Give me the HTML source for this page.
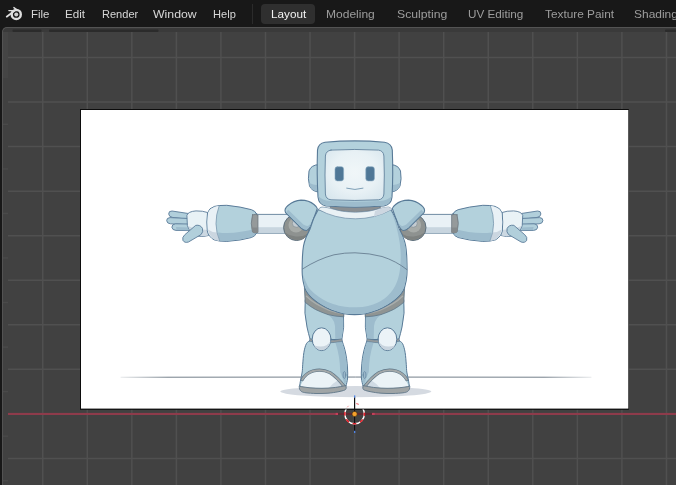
<!DOCTYPE html>
<html><head><meta charset="utf-8">
<style>
html,body{margin:0;padding:0;background:#181818;}
body{width:676px;height:485px;overflow:hidden;position:relative;font-family:"Liberation Sans",sans-serif;}
.m,.t{position:absolute;top:7px;font-size:11.5px;line-height:14px;white-space:nowrap;display:inline-block;transform-origin:0 0;}
.m{color:#d6d6d6;}
.t{color:#9c9c9c;}
#lay{position:absolute;left:261px;top:4px;width:54px;height:20px;background:#2f2f2f;border-radius:4px;}
#sep{position:absolute;left:252px;top:4px;width:1px;height:20px;background:#2b2b2b;}
svg{position:absolute;left:0;top:0;}
#txt{position:absolute;left:0;top:0;width:676px;height:27px;overflow:hidden;filter:grayscale(1);}
</style></head><body>
<svg width="676" height="485" viewBox="0 0 676 485">
<path d="M2 485V32a5 5 0 0 1 5-5H676V485Z" fill="#414141"/>
<rect x="3" y="28" width="673" height="4" fill="#3a3a3a"/>
<rect x="3" y="32" width="5" height="46" fill="#454545"/>
<path d="M2.5 485V32a4.500 4.500 0 0 1 4.500-4.500H676" fill="none" stroke="#535353" stroke-width="1"/>
<rect x="12.500" y="29.500" width="29" height="2.500" rx="1" fill="#2b2b2b"/>
<rect x="49" y="29.500" width="109.500" height="2.500" rx="1" fill="#2b2b2b"/>
<rect x="665" y="29.500" width="14" height="2.500" rx="1" fill="#2b2b2b"/>
<g stroke="#505050" stroke-width="1.500">
<line x1="42.75" y1="32" x2="42.75" y2="485"/>
<line x1="87.30" y1="32" x2="87.30" y2="485"/>
<line x1="131.85" y1="32" x2="131.85" y2="485"/>
<line x1="176.40" y1="32" x2="176.40" y2="485"/>
<line x1="220.95" y1="32" x2="220.95" y2="485"/>
<line x1="265.50" y1="32" x2="265.50" y2="485"/>
<line x1="310.05" y1="32" x2="310.05" y2="485"/>
<line x1="354.60" y1="32" x2="354.60" y2="485"/>
<line x1="399.15" y1="32" x2="399.15" y2="485"/>
<line x1="443.70" y1="32" x2="443.70" y2="485"/>
<line x1="488.25" y1="32" x2="488.25" y2="485"/>
<line x1="532.80" y1="32" x2="532.80" y2="485"/>
<line x1="577.35" y1="32" x2="577.35" y2="485"/>
<line x1="621.90" y1="32" x2="621.90" y2="485"/>
<line x1="666.45" y1="32" x2="666.45" y2="485"/>
<line x1="8" y1="57.50" x2="676" y2="57.50"/>
<line x1="8" y1="102.05" x2="676" y2="102.05"/>
<line x1="8" y1="146.60" x2="676" y2="146.60"/>
<line x1="8" y1="191.15" x2="676" y2="191.15"/>
<line x1="8" y1="235.70" x2="676" y2="235.70"/>
<line x1="8" y1="280.25" x2="676" y2="280.25"/>
<line x1="8" y1="324.80" x2="676" y2="324.80"/>
<line x1="8" y1="369.35" x2="676" y2="369.35"/>
<line x1="8" y1="458.45" x2="676" y2="458.45"/>
</g>
<rect x="3" y="123.62" width="5" height="1.4" fill="#4a4a4a"/>
<rect x="3" y="168.18" width="5" height="1.4" fill="#4a4a4a"/>
<rect x="3" y="212.72" width="5" height="1.4" fill="#4a4a4a"/>
<rect x="3" y="257.28" width="5" height="1.4" fill="#4a4a4a"/>
<rect x="3" y="301.82" width="5" height="1.4" fill="#4a4a4a"/>
<rect x="3" y="346.38" width="5" height="1.4" fill="#4a4a4a"/>
<rect x="3" y="390.93" width="5" height="1.4" fill="#4a4a4a"/>
<rect x="3" y="435.47" width="5" height="1.4" fill="#4a4a4a"/>
<rect x="3" y="480.02" width="5" height="1.4" fill="#4a4a4a"/>
<!-- x axis -->
<rect x="8" y="412.900" width="668" height="2.100" fill="#8e3b4b"/>
<!-- image -->
<rect x="80" y="109" width="548.800" height="300.800" fill="#0c0c0c"/>
<rect x="81" y="110" width="547.300" height="298.600" fill="#ffffff"/>
<g id="robot" stroke-linejoin="round" stroke-linecap="round">
<defs>
<linearGradient id="gl" gradientUnits="userSpaceOnUse" x1="121" y1="0" x2="591" y2="0"><stop offset="0" stop-color="#5a6875" stop-opacity="0.150"/><stop offset="0.100" stop-color="#5a6875" stop-opacity="0.850"/><stop offset="0.900" stop-color="#5a6875" stop-opacity="0.850"/><stop offset="1" stop-color="#5a6875" stop-opacity="0.150"/></linearGradient>
<radialGradient id="fg" cx="0.5" cy="0.45" r="0.65"><stop offset="0" stop-color="#f0f6f8"/><stop offset="0.6" stop-color="#e8f1f5"/><stop offset="1" stop-color="#d9e7ee"/></radialGradient>
<g id="arm">
  <!-- fingers -->
  <g fill="#b1cfdb" stroke="#5b7c9a" stroke-width="0.900">
    <path d="M189 213.600 L172 211 Q168.600 210.800 168.700 214 Q169 217 172.500 217.400 L189 219.500Z"/>
    <path d="M189 218.500 L170 217.600 Q166.500 217.800 166.700 220.700 Q167 223.600 170.500 223.800 L189 224.800Z"/>
    <path d="M189 224 L175.500 223.800 Q171.800 224.200 171.900 227.200 Q172.200 230.200 176 230.400 L189 230.600Z"/>
  </g>
  <path d="M176 227 L188 227.500 L188 230.300 L176.500 230Z" fill="#9dbccd"/>
  <!-- palm -->
  <path d="M187 215 Q188 211.500 196 210.900 Q203 210.800 207.500 212.500 L208.500 235.500 Q203 237.200 198 236.200 Q190 233.500 187.500 226Z" fill="#e9f2f6" stroke="#5b7c9a" stroke-width="0.900"/>
  <path d="M188 226 Q195 229 207.800 230 L208.200 235.200 Q203 236.800 198 235.800 Q191 233.300 188 226Z" fill="#ccd8e2"/>
  <!-- thumb -->
  <path d="M196.100 225.300 Q200.500 224.500 202.500 228.500 Q203.500 232 201 234.600 L188.500 242 Q184.500 243.300 182.900 240.300 Q181.900 237.300 184.500 235Z" fill="#b1cfdb" stroke="#5b7c9a" stroke-width="0.900"/>
  <!-- upper arm tube -->
  <rect x="255" y="214.400" width="36" height="18.800" fill="#e9f1f6" stroke="#5f7e98" stroke-width="0.900"/>
  <rect x="255.500" y="227.200" width="35" height="5.600" fill="#c8d5df"/>
  <!-- forearm -->
  <path d="M256.500 213.800 Q255.500 211 251.500 209.700 Q241 206.700 226.800 205.300 Q219 205.200 214.500 206.400 Q209 208 207.500 213 Q206.300 222 207.300 231 Q208.500 236.500 214 239.800 Q219 241.500 226.800 241.400 Q241 240.500 251.500 237.500 Q255.500 236 256.500 233 Q253 223.500 256.500 213.800Z" fill="#b3d1dc" stroke="#5b7c9a" stroke-width="1"/>
  <path d="M218 232.500 Q235 234.500 256.200 228.800 L256.200 232.800 Q255.300 235.600 251.400 237 Q241 240 226.800 240.900 Q221 240.900 219.500 240.500Z" fill="#9dbccd"/>
  <path d="M219.100 206 Q217 205.800 214.600 206.900 Q209.400 208.400 208 213.100 Q206.800 222 207.800 230.900 Q208.900 236.100 214.200 239.300 Q217 240.400 219.600 240.700 Q212.500 224 219.100 206Z" fill="#e9f1f6"/>
  <path d="M207.900 229.500 Q212 232.500 217 232.500 L219.300 240.600 Q216.500 240.400 214.200 239.300 Q209.500 236.500 207.900 229.500Z" fill="#cbd6e0"/>
  <path d="M219.100 206 Q212.500 224 219.600 240.800" fill="none" stroke="#6f8ea8" stroke-width="0.700"/>
  <!-- elbow ring -->
  <path d="M252.500 214.800 Q256 213.800 258 215 L258 232.400 Q255 233.800 252.500 232 Q250 223.500 252.500 214.800Z" fill="#959a9b" stroke="#65717a" stroke-width="0.700"/>
  <path d="M251.700 227.500 L258 227.500 L258 232.400 Q255 233.800 252.500 232Z" fill="#84898b"/>
  <!-- shoulder joint -->
  <circle cx="296.600" cy="227.500" r="13" fill="#8e9290" stroke="#5c6e7c" stroke-width="1"/>
  <path d="M284.500 232 Q289 240 298 240 Q305 239.500 308.500 233.500 Q301 238 293.500 236 Q288 235 284.500 232Z" fill="#7e8280"/>
  <circle cx="296" cy="225" r="7.500" fill="#a7aba8"/>
  <circle cx="296.300" cy="223.300" r="4" fill="#c4cbd0" stroke="#858f95" stroke-width="0.700"/>
  <!-- shoulder pad -->
  <path d="M285.500 212.500 Q283.800 209 288 205.500 Q294 200.300 301 200.100 Q309 200.200 314 204.500 Q317 207 317.300 208.500 Q314.500 217 311.400 224.200 Q309 229 306.800 230.400 Q304 230.500 301 228 Z" fill="#b3d1dc" stroke="#587a97" stroke-width="1.100"/>
  <path d="M286 212.300 L288.200 209.800 L303.300 224.500 Q306 226.300 308.300 225.800 Q310 225 311.800 222 Q310 227.500 306.700 229.800 Q304 229.900 301.300 227.600Z" fill="#9dbccd"/>
</g>
<g id="leg">
  <!-- thigh -->
  <path d="M305.200 300 Q303.800 313 307 327 Q308.500 334 310.200 339.500 L341.800 339.500 Q344.600 328 343.500 314 Z" fill="#b3d1dc" stroke="#587a97" stroke-width="1"/>
  <path d="M325 313 Q334 317 335 326 L335.300 339 L341.500 339 Q344.100 328 343 314.500Z" fill="#9dbccd"/>
  <!-- shin -->
  <path d="M310.20 340.50 C309.57 341.03 307.45 341.72 306.40 343.70 C305.35 345.68 304.52 348.90 303.90 352.40 C303.28 355.90 302.98 361.43 302.70 364.70 C302.42 367.97 302.55 369.45 302.20 372.00 C301.85 374.55 301.03 377.67 300.60 380.00 C300.17 382.33 299.77 385.00 299.60 386.00 L346 386 C346.27 384.67 347.35 381.00 347.60 378.00 C347.85 375.00 347.67 371.23 347.50 368.00 C347.33 364.77 347.05 361.68 346.60 358.60 C346.15 355.52 345.57 352.52 344.80 349.50 C344.03 346.48 342.47 342.00 342.00 340.50 Q327 343.500 310.200 340.500Z" fill="#b3d1dc" stroke="#587a97" stroke-width="1"/>
  <path d="M335.500 343 Q340 356 340.200 372 Q343 378 345 385.500 Q347.700 377 346.800 365 Q345.500 352 341.700 341.500Z" fill="#9dbccd"/>
  <path d="M310.200 338.800 Q327 342 342 338.800 L342.300 341.300 Q327 344.500 309.700 341.300Z" fill="#959a9c" stroke="#587a97" stroke-width="0.600"/>
  <ellipse cx="344.400" cy="375" rx="1.400" ry="3.400" fill="#9ab7c9" stroke="#587a97" stroke-width="0.600"/>
  <!-- knee -->
  <ellipse cx="321.600" cy="339.200" rx="9.400" ry="11.400" fill="#ebf3f7" stroke="#587a97" stroke-width="1"/>
  <path d="M313.800 345.500 Q317 350.600 323 350 Q329 348.500 330.700 341 Q326 349 313.800 345.500Z" fill="#c8d4de"/>
  <!-- foot -->
  <path d="M300.200 386.600 Q302.500 380 307 375.500 Q313 371.600 321 370.800 Q329 372 335 377.500 Q340 382.500 342.800 386.800 Q322 390 300.200 386.600Z" fill="#ebf3f7"/>
  <path d="M329 388 Q333 383 337.500 380.500 Q340.500 383.500 342.800 386.800 Q336 388 329 388Z" fill="#d0dbe4"/>
  <path d="M302.300 379.500 Q305.500 373.500 313 371 Q322 368.800 330 372.600 Q337 377 344.300 386.500" fill="none" stroke="#5d7587" stroke-width="3.200"/>
  <path d="M302.300 379.500 Q305.500 373.500 313 371 Q322 368.800 330 372.600 Q337 377 344.300 386.500" fill="none" stroke="#a3a8a9" stroke-width="1.900"/>
  <path d="M299.50 386.30 C301.25 386.55 306.25 387.47 310.00 387.80 C313.75 388.13 318.00 388.33 322.00 388.30 C326.00 388.27 330.00 388.05 334.00 387.60 C338.00 387.15 344.00 385.93 346.00 385.60 L346.2 388.2 C345.97 388.50 346.17 389.40 344.80 390.00 C343.43 390.60 340.80 391.27 338.00 391.80 C335.20 392.33 331.67 392.92 328.00 393.20 C324.33 393.48 319.67 393.57 316.00 393.50 C312.33 393.43 308.42 393.12 306.00 392.80 C303.58 392.48 302.53 392.15 301.50 391.60 C300.47 391.05 300.08 389.85 299.80 389.50Z" fill="#a0a5a6" stroke="#5d7587" stroke-width="0.900"/>
</g>
</defs>
<!-- shadow -->
<ellipse cx="355.800" cy="391.600" rx="75.500" ry="5.600" fill="#d5dae1"/>
<!-- ground line -->
<path d="M121 377.250 Q355 376.850 591 377.250" fill="none" stroke="url(#gl)" stroke-width="1"/>
<!-- legs -->
<use href="#leg"/>
<use href="#leg" transform="translate(709 0) scale(-1 1)"/>
<!-- waist band -->
<g><path d="M304.400 288 L305.200 302.300 Q310 306.500 315.500 309.500 Q322 312.600 328 314.600 Q336 316.600 343.800 316.800 L343.800 304 Z" fill="#8f9493" stroke="#5d7587" stroke-width="0.800"/><path d="M306.500 296.300 Q311 300.800 316.500 303.800 Q323 307.500 329 310 Q337 313 344 313.600" fill="none" stroke="#a9aead" stroke-width="1.500"/></g>
<g transform="translate(709 0) scale(-1 1)"><path d="M304.400 288 L305.200 302.300 Q310 306.500 315.500 309.500 Q322 312.600 328 314.600 Q336 316.600 343.800 316.800 L343.800 304 Z" fill="#8f9493" stroke="#5d7587" stroke-width="0.800"/><path d="M306.500 296.300 Q311 300.800 316.500 303.800 Q323 307.500 329 310 Q337 313 344 313.600" fill="none" stroke="#a9aead" stroke-width="1.500"/></g>
<!-- arms -->
<use href="#arm"/>
<use href="#arm" transform="translate(709.600 0) scale(-1 1)"/>
<!-- neck -->
<ellipse cx="355.300" cy="207" rx="25.300" ry="4.800" fill="#8a8f93" stroke="#6d7479" stroke-width="0.700"/>
<!-- body -->
<path id="bodyp" d="M318.30 209.50 C317.50 211.08 314.88 215.75 313.50 219.00 C312.12 222.25 311.25 225.92 310.00 229.00 C308.75 232.08 307.08 234.67 306.00 237.50 C304.92 240.33 304.10 242.58 303.50 246.00 C302.90 249.42 302.60 253.17 302.40 258.00 C302.20 262.83 301.95 270.15 302.30 275.00 C302.65 279.85 303.55 283.98 304.50 287.10 C305.45 290.22 306.45 291.63 308.00 293.70 C309.55 295.77 311.80 297.78 313.80 299.50 C315.80 301.22 317.63 302.52 320.00 304.00 C322.37 305.48 325.33 307.13 328.00 308.40 C330.67 309.67 333.35 310.72 336.00 311.60 C338.65 312.48 340.80 313.20 343.90 313.70 C347.00 314.20 351.03 314.60 354.60 314.60 C358.17 314.60 362.20 314.20 365.30 313.70 C368.40 313.20 370.55 312.48 373.20 311.60 C375.85 310.72 378.53 309.67 381.20 308.40 C383.87 307.13 386.83 305.48 389.20 304.00 C391.57 302.52 393.40 301.22 395.40 299.50 C397.40 297.78 399.65 295.77 401.20 293.70 C402.75 291.63 403.75 290.22 404.70 287.10 C405.65 283.98 406.55 279.85 406.90 275.00 C407.25 270.15 407.00 262.83 406.80 258.00 C406.60 253.17 406.30 249.42 405.70 246.00 C405.10 242.58 404.28 240.33 403.20 237.50 C402.12 234.67 400.45 232.08 399.20 229.00 C397.95 225.92 397.08 222.25 395.70 219.00 C394.32 215.75 391.70 211.08 390.90 209.50 Q354.6 224 318.3 209.5Z" fill="#b3d1dc" stroke="#587a97" stroke-width="1.100"/>
<!-- body shade -->
<path d="M390.30 209.20 C391.10 210.78 393.72 215.45 395.10 218.70 C396.48 221.95 397.35 225.62 398.60 228.70 C399.85 231.78 401.52 234.37 402.60 237.20 C403.68 240.03 404.50 242.28 405.10 245.70 C405.70 249.12 406.00 252.87 406.20 257.70 C406.40 262.53 406.65 269.85 406.30 274.70 C405.95 279.55 405.05 283.68 404.10 286.80 C403.15 289.92 402.15 291.33 400.60 293.40 C399.05 295.47 396.80 297.48 394.80 299.20 C392.80 300.92 390.97 302.22 388.60 303.70 C386.23 305.18 383.27 306.83 380.60 308.10 C377.93 309.37 375.25 310.42 372.60 311.30 C369.95 312.18 367.70 312.95 364.70 313.40 C361.70 313.85 357.97 314.00 354.60 314.00 C351.23 314.00 347.50 313.85 344.50 313.40 C341.50 312.95 339.25 312.18 336.60 311.30 C333.95 310.42 331.27 309.37 328.60 308.10 C325.93 306.83 322.97 305.18 320.60 303.70 C318.23 302.22 316.40 300.92 314.40 299.20 C312.40 297.48 310.15 295.47 308.60 293.40 C307.05 291.33 306.05 289.92 305.10 286.80 C304.15 283.68 303.27 276.72 302.90 274.70 L305.50 281.00 C306.08 282.17 307.42 285.83 309.00 288.00 C310.58 290.17 312.67 292.08 315.00 294.00 C317.33 295.92 320.00 297.83 323.00 299.50 C326.00 301.17 329.33 302.78 333.00 304.00 C336.67 305.22 341.00 306.25 345.00 306.80 C349.00 307.35 353.17 307.43 357.00 307.30 C360.83 307.17 364.50 306.80 368.00 306.00 C371.50 305.20 374.83 304.08 378.00 302.50 C381.17 300.92 384.33 298.92 387.00 296.50 C389.67 294.08 392.08 291.25 394.00 288.00 C395.92 284.75 397.42 281.00 398.50 277.00 C399.58 273.00 400.17 268.50 400.50 264.00 C400.83 259.50 400.83 254.67 400.50 250.00 C400.17 245.33 399.42 240.67 398.50 236.00 C397.58 231.33 396.25 226.25 395.00 222.00 C393.75 217.75 391.67 212.42 391.00 210.50Z" fill="#9dbccd"/>
<!-- belly line -->
<path d="M302.500 269 Q318 259 334 254.800 Q345 252.600 355 252.800 Q370 253.200 382 256.500 Q396 261 406.800 269.500" fill="none" stroke="#5e7488" stroke-width="0.800"/>
<!-- collar -->
<path d="M318.300 209.500 Q319.500 207.300 322 207 Q328 207.500 331 208.500 Q342 212.300 355.300 212.300 Q369 212.300 380 208.500 Q383 207.500 388.500 207 Q391 207.400 391.800 209.500 Q375 218.800 355.300 218.800 Q335 218.800 318.300 209.500Z" fill="#e9f1f5" stroke="#6f8da6" stroke-width="0.700"/>
<path d="M375 211 Q380 209 384 207.500 L388.500 207.200 Q390.800 207.600 391.400 209.500 Q383 214.200 374 216.500Z" fill="#cdd7e1"/>
<!-- ears -->
<path d="M318.500 164.600 Q311 165 309 171 Q307.600 179 309.500 186 Q312 191.500 318.500 192Z" fill="#b3d1dc" stroke="#5b7c9a" stroke-width="1"/>
<path d="M309.300 183 Q314 185.500 318.500 185 L318.500 191.500 Q312.500 191 309.800 186.500Z" fill="#9dbccd"/>
<path d="M391 164.600 Q398.500 165 400.500 171 Q401.900 179 400 186 Q397.500 191.500 391 192Z" fill="#b3d1dc" stroke="#5b7c9a" stroke-width="1"/>
<path d="M400.200 183 Q395.500 185.500 391 185 L391 191.500 Q397 191 399.700 186.500Z" fill="#9dbccd"/>
<!-- head -->
<path d="M325 142.200 Q355 139.600 384.500 142.200 Q391.500 143.300 392.300 150 Q393.300 175 392 197 Q391.300 204.600 384 206 Q355 208.300 326 206 Q318.700 204.600 318 197 Q316.700 175 317.500 150 Q318.200 143.300 325 142.200Z" fill="#b3d1dc" stroke="#587a97" stroke-width="1.100"/>
<path d="M318.500 196 Q322 200.300 330 201 Q355 202.300 380 201 Q388 200.300 391.500 196 Q391 204.200 384 205.500 Q355 207.800 326 205.500 Q319.200 204.200 318.500 196Z" fill="#9dbccd"/>
<!-- face -->
<path d="M331 150.100 Q355 148.800 378.500 150.100 Q383.500 150.800 383.900 156 Q384.700 175 383.900 194 Q383.400 199.200 378.500 199.800 Q355 201.100 331 199.800 Q325.800 199.200 325.400 194 Q324.600 175 325.400 156 Q325.800 150.800 331 150.100Z" fill="url(#fg)" stroke="#62829d" stroke-width="0.900"/>
<!-- eyes -->
<rect x="335" y="166.700" width="8.600" height="14.200" rx="2.300" fill="#4f7796" stroke="#86a8c0" stroke-width="0.600"/>
<rect x="365.800" y="166.700" width="8.600" height="14.200" rx="2.300" fill="#4f7796" stroke="#86a8c0" stroke-width="0.600"/>
<!-- smile -->
<path d="M346.700 188.200 Q355 190.800 363 188.200" fill="none" stroke="#6289a5" stroke-width="0.800"/>
</g>

<!-- cursor -->
<g id="cursor">
<rect x="337.500" y="412.900" width="35" height="2.100" fill="#5a2a33"/>
<rect x="335.600" y="412.900" width="2.400" height="2.100" fill="#c4405a"/>
<rect x="372" y="412.900" width="2.700" height="2.100" fill="#c4405a"/>
<line x1="354.600" y1="397.300" x2="354.600" y2="431" stroke="#111" stroke-width="1.200"/>
<rect x="354" y="395.400" width="1.300" height="2.200" fill="#4f86e8"/>
<rect x="354" y="430.800" width="1.300" height="2.200" fill="#4f86e8"/>
<clipPath id="cc"><rect x="340" y="409.600" width="30" height="20"/></clipPath>
<g clip-path="url(#cc)">
<circle cx="354.600" cy="414" r="9.800" fill="none" stroke="#ffffff" stroke-width="1.400"/>
<circle cx="354.600" cy="414" r="9.800" fill="none" stroke="#e0202a" stroke-width="1.500" stroke-dasharray="3.850 3.850" stroke-dashoffset="1.900"/>
</g>
<path d="M347.200 407.300 L348.600 405.800" stroke="#f0a0a4" stroke-width="1" fill="none"/>
<path d="M356.300 403.600 L358.800 404.300" stroke="#ee5a62" stroke-width="1" fill="none"/>
<circle cx="354.600" cy="414" r="2.600" fill="#f4a12b" stroke="#3a2a10" stroke-width="0.600"/>
</g>
</svg>
<!-- top bar -->
<svg width="30" height="27" viewBox="0 0 30 27">
<g fill="none" stroke="#dedede" stroke-linecap="round">
<circle cx="16.250" cy="14.400" r="4.550" stroke-width="2.400"/>
<path d="M6.700 16.700 L14.200 11" stroke-width="1.700"/>
<path d="M8.900 10.600H16.500" stroke-width="1.400"/>
<path d="M13.900 7.600L18.200 10.700" stroke-width="1.400"/>
</g>
<circle cx="16.250" cy="14.400" r="2" fill="#d0d0d0"/>
</svg>
<div id="sep"></div><div id="lay"></div>
<div id="txt">
<span class="m" style="left:31.4px;transform:scaleX(0.993);">File</span>
<span class="m" style="left:65.4px;transform:scaleX(1.014);">Edit</span>
<span class="m" style="left:101.5px;transform:scaleX(0.96);">Render</span>
<span class="m" style="left:153.1px;transform:scaleX(1.068);">Window</span>
<span class="m" style="left:212.5px;transform:scaleX(0.964);">Help</span>
<span class="m" style="left:270.6px;transform:scaleX(1.019);color:#f2f2f2;">Layout</span>
<span class="t" style="left:326.4px;transform:scaleX(1.046);">Modeling</span>
<span class="t" style="left:396.6px;transform:scaleX(1.063);">Sculpting</span>
<span class="t" style="left:467.8px;transform:scaleX(1.018);">UV Editing</span>
<span class="t" style="left:544.5px;transform:scaleX(1.029);">Texture Paint</span>
<span class="t" style="left:634.3px;transform:scaleX(1.04);">Shading</span>
</div>
</body></html>
